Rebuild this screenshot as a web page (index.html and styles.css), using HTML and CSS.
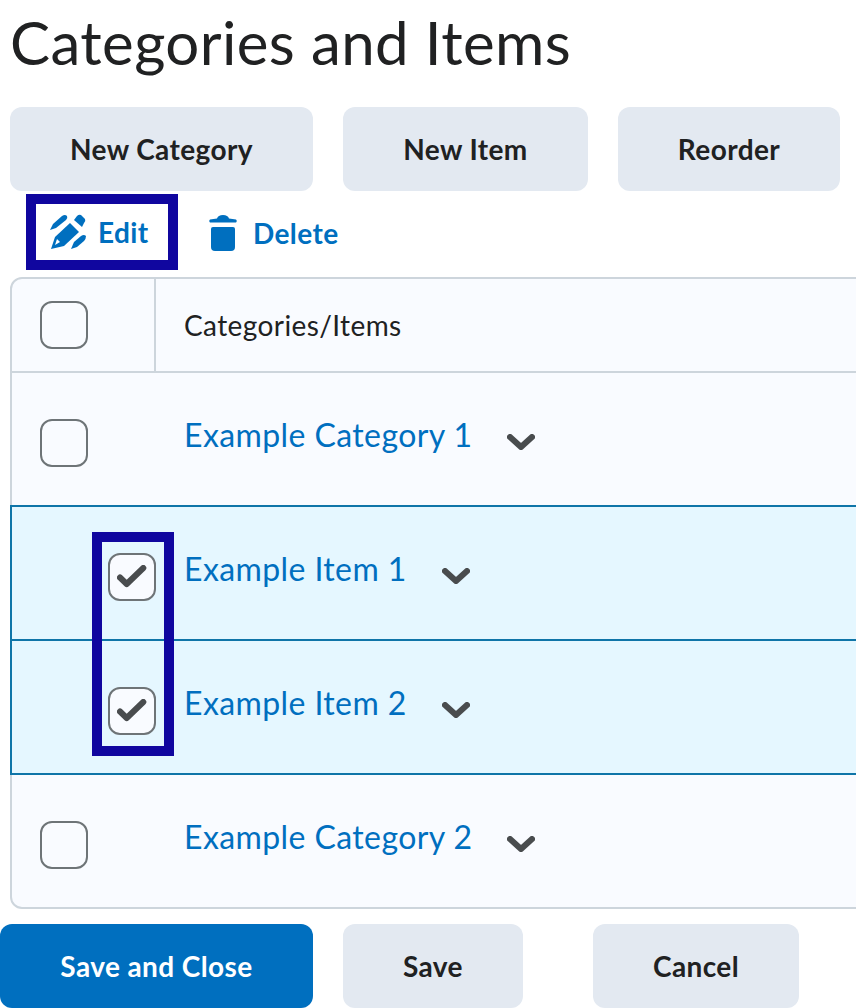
FILE: index.html
```html
<!DOCTYPE html>
<html lang="en">
<head>
    <meta charset="UTF-8">
    <title>Categories and Items</title>
    <link rel="stylesheet" href="styles.css">
</head>
<body>
    <h1>Categories and Items</h1>

    <div class="top-buttons">
        <button class="btn btn-category">New Category</button>
        <button class="btn btn-item">New Item</button>
        <button class="btn btn-reorder">Reorder</button>
    </div>

    <div class="actions">
        <a class="action action-edit" href="#">
            <svg class="icon-edit" viewBox="0 0 36 36">
                <path d="M1 35 L5 23 L20 9 L29 18 L14 32 Z" fill="#006fbf"/>
                <path d="M5 31 L7 25 L10 28 Z" fill="#fff"/>
                <path d="M24 6 L27 2 Q29 0 31 1 L35 5 Q36 7 34 9 L32 13 Z" fill="#006fbf"/>
                <path d="M0 16 L3 10 L12 2 Q15 0 17 2 Q18 4 16 6 L6 14 Z" fill="#006fbf"/>
                <path d="M21 35 L24 28 L31 22 Q34 20 36 22 Q36 25 34 27 L27 33 Z" fill="#006fbf"/>
            </svg>
            Edit
        </a>
        <a class="action action-delete" href="#">
            <svg class="icon-delete" viewBox="0 0 28 36">
                <path d="M1 7.5 Q-0.5 6 1 4.5 L8 3.5 Q9 0 14 0 Q19 0 20 3.5 L27 4.5 Q28.5 6 27 7.5 Z" fill="#006fbf"/>
                <path d="M4 12 L24 12 Q26 12 26 14 L26 32 Q26 36 22 36 L6 36 Q2 36 2 32 L2 14 Q2 12 4 12 Z" fill="#006fbf"/>
            </svg>
            Delete
        </a>
    </div>

    <div class="table">
        <div class="row row-head">
            <div class="cell-check"><span class="checkbox"></span></div>
            <div class="cell-title">Categories/Items</div>
        </div>
        <div class="row row-first">
            <div class="cell-check"><span class="checkbox"></span></div>
            <div class="cell-title"><a href="#">Example Category 1</a><svg class="chevron" viewBox="0 0 28 16"><path d="M3 3 L14 13 L25 3" fill="none" stroke="#494c4e" stroke-width="6" stroke-linecap="round" stroke-linejoin="round"/></svg></div>
        </div>
        <div class="row row-selected">
            <div class="cell-check"><span class="checkbox"><svg class="check" viewBox="0 0 30 24"><path d="M3 12.5 L9.7 19 L26.3 3" fill="none" stroke="#494c4e" stroke-width="6" stroke-linecap="round" stroke-linejoin="round"/></svg></span></div>
            <div class="cell-title"><a href="#">Example Item 1</a><svg class="chevron" viewBox="0 0 28 16"><path d="M3 3 L14 13 L25 3" fill="none" stroke="#494c4e" stroke-width="6" stroke-linecap="round" stroke-linejoin="round"/></svg></div>
        </div>
        <div class="row row-selected">
            <div class="cell-check"><span class="checkbox"><svg class="check" viewBox="0 0 30 24"><path d="M3 12.5 L9.7 19 L26.3 3" fill="none" stroke="#494c4e" stroke-width="6" stroke-linecap="round" stroke-linejoin="round"/></svg></span></div>
            <div class="cell-title"><a href="#">Example Item 2</a><svg class="chevron" viewBox="0 0 28 16"><path d="M3 3 L14 13 L25 3" fill="none" stroke="#494c4e" stroke-width="6" stroke-linecap="round" stroke-linejoin="round"/></svg></div>
        </div>
        <div class="row row-last">
            <div class="cell-check"><span class="checkbox"></span></div>
            <div class="cell-title"><a href="#">Example Category 2</a><svg class="chevron" viewBox="0 0 28 16"><path d="M3 3 L14 13 L25 3" fill="none" stroke="#494c4e" stroke-width="6" stroke-linecap="round" stroke-linejoin="round"/></svg></div>
        </div>
        <div class="highlight-checks"></div>
    </div>

    <div class="bottom-buttons">
        <button class="btn btn-primary">Save and Close</button>
        <button class="btn btn-save">Save</button>
        <button class="btn btn-cancel">Cancel</button>
    </div>
</body>
</html>
```

FILE: styles.css
```css
html, body {
    margin: 0;
    padding: 0;
    height: 1008px;
    overflow: hidden;
}

body {
    font-family: Lato, "Open Sans", sans-serif;
    color: #202122;
    background: #fff;
    width: 856px;
    letter-spacing: 0.4px;
}

h1 {
    margin: 0;
    padding-left: 10px;
    height: 107px;
    font-size: 60px;
    font-weight: 400;
    line-height: 84px;
}

.btn {
    height: 84px;
    border: none;
    border-radius: 12px;
    background: #e3e9f1;
    color: #202122;
    font-family: inherit;
    font-size: 28px;
    font-weight: 700;
    letter-spacing: 0.4px;
    padding: 0;
}

.top-buttons {
    display: flex;
    padding-left: 10px;
}

.btn-category { width: 303px; margin-right: 30px; }
.btn-item { width: 245px; margin-right: 30px; }
.btn-reorder { width: 222px; }

.actions {
    display: flex;
    align-items: flex-start;
    height: 86px;
    padding-left: 26px;
}

.action {
    display: flex;
    align-items: center;
    color: #006fbf;
    font-size: 28px;
    font-weight: 700;
    text-decoration: none;
}

.action-edit {
    box-sizing: border-box;
    width: 152px;
    height: 76px;
    margin-top: 3px;
    border: 10px solid #10069f;
    padding-left: 14px;
}

.icon-edit {
    width: 36px;
    height: 36px;
    margin-right: 12px;
}

.action-delete {
    margin-left: 31px;
    margin-top: 24px;
}

.icon-delete {
    width: 28px;
    height: 36px;
    margin-right: 16px;
}

.table {
    position: relative;
    box-sizing: border-box;
    width: 880px;
    height: 632px;
    margin-left: 10px;
    background: #f9fbff;
    border: 2px solid #cdd5dc;
    border-radius: 12px;
}

.row {
    display: flex;
    height: 134px;
    box-sizing: border-box;
    margin: 0 0 0 -2px;
    font-size: 32px;
}

.row-head {
    height: 94px;
    margin-left: 0;
    border-bottom: 2px solid #cdd5dc;
    font-size: 28px;
}

.row-first {
    height: 132px;
}

.row-selected {
    background: #e5f7ff;
    border: 2px solid #0f75a8;
    border-right: none;
    height: 136px;
}

.row-selected + .row-selected {
    border-top: none;
    height: 134px;
}

.cell-check {
    box-sizing: border-box;
    width: 145px;
    padding: 46px 0 0 30px;
    flex-shrink: 0;
}

.row-head .cell-check {
    width: 144px;
    padding: 22px 0 0 28px;
    border-right: 2px solid #cdd5dc;
}

.row-selected .cell-check {
    padding: 46px 0 0 96px;
}

.checkbox {
    display: flex;
    align-items: center;
    justify-content: center;
    box-sizing: border-box;
    width: 48px;
    height: 48px;
    background: #f9fbff;
    border: 2px solid #6e7477;
    border-radius: 12px;
}

.check {
    width: 30px;
    height: 24px;
}

.cell-title {
    display: flex;
    align-items: center;
    height: 64px;
    margin-top: 29px;
    margin-left: -1px;
    padding-left: 30px;
}

.row-head .cell-title {
    height: 92px;
    margin-top: 0;
    margin-left: 0;
    padding-left: 28px;
}

.row-selected .cell-title {
    padding-left: 28px;
}

.cell-title a {
    color: #006fbf;
    text-decoration: none;
}

.chevron {
    width: 28px;
    height: 16px;
    margin-left: 35px;
    margin-top: 16px;
}

.highlight-checks {
    position: absolute;
    left: 80px;
    top: 253px;
    box-sizing: border-box;
    width: 82px;
    height: 224px;
    border: 10px solid #10069f;
}

.bottom-buttons {
    display: flex;
    margin-top: 15px;
}

.btn-primary {
    width: 313px;
    margin-right: 30px;
    background: #006fbf;
    color: #fff;
}

.btn-save { width: 180px; margin-right: 70px; }
.btn-cancel { width: 206px; }
```
